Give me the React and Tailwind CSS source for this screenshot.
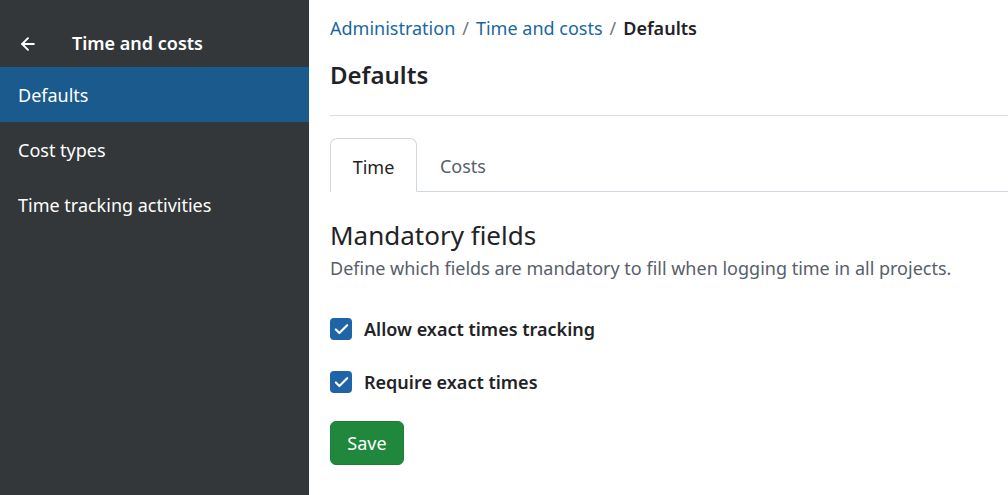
import React from 'react';
import { ArrowLeft, Check } from 'lucide-react';

const MENU = ['Defaults', 'Cost types', 'Time tracking activities'];

function Checkbox({ label }) {
  return (
    <label className="flex items-center gap-[12px] h-[22px]">
      <span className="w-[22px] h-[22px] rounded-[4px] bg-[#1f64a6] flex items-center justify-center">
        <Check className="w-[17px] h-[17px] text-white" strokeWidth={3} />
      </span>
      <span className="text-[18px] font-semibold text-[#1f2328]">{label}</span>
    </label>
  );
}

export default function App() {
  return (
    <div className="flex w-[1008px] h-[495px] overflow-hidden bg-white" style={{ fontFamily: '"Noto Sans", "Open Sans", sans-serif' }}>
      {/* Sidebar */}
      <aside className="w-[309px] shrink-0 bg-[#333739] text-white">
        <div className="h-[67px] pt-[20px] flex items-center pl-[18px]">
          <ArrowLeft className="w-[20px] h-[20px]" strokeWidth={2.25} />
          <span className="ml-[34px] text-[18px] font-semibold">Time and costs</span>
        </div>
        {MENU.map((item, i) => (
          <div
            key={item}
            className={`h-[55px] pt-[2px] flex items-center pl-[18px] text-[18px] ${i === 0 ? 'bg-[#1a5a8c]' : ''}`}
          >
            {item}
          </div>
        ))}
      </aside>

      {/* Main */}
      <main className="flex-1 pl-[21px]">
        <div className="pt-[15px] text-[18px] leading-[26px] flex items-center gap-[7px]">
          <span className="text-[#1a67a3]">Administration</span>
          <span className="text-[#6e7781]">/</span>
          <span className="text-[#1a67a3]">Time and costs</span>
          <span className="text-[#6e7781]">/</span>
          <span className="font-semibold text-[#1f2328]">Defaults</span>
        </div>
        <h1 className="mt-[18px] text-[24px] leading-[32px] font-semibold text-[#1f2328]">Defaults</h1>
        <div className="mt-[24px] border-t border-[#d8dee4]" />

        {/* Tabs */}
        <div className="mt-[22px] flex border-b border-[#d0d7de] h-[54px]">
          <div className="w-[87px] -mb-px pt-[4px] border border-b-white border-[#d0d7de] rounded-t-[7px] bg-white flex items-center justify-center text-[18px] text-[#1f2328]">
            Time
          </div>
          <div className="w-[92px] pt-[4px] flex items-center justify-center text-[18px] text-[#57606a]">Costs</div>
        </div>

        <h2 className="mt-[26px] text-[26px] leading-[34px] text-[#1f2328]">Mandatory fields</h2>
        <p className="mt-[3px] text-[18px] leading-[26px] text-[#57606a]">
          Define which fields are mandatory to fill when logging time in all projects.
        </p>

        <div className="mt-[37px] flex flex-col gap-[31px]">
          <Checkbox label="Allow exact times tracking" />
          <Checkbox label="Require exact times" />
        </div>

        <button className="mt-[28px] w-[74px] h-[44px] rounded-[6px] bg-[#1f883d] border border-[#1a7f37] text-white text-[18px]">
          Save
        </button>
      </main>
    </div>
  );
}
